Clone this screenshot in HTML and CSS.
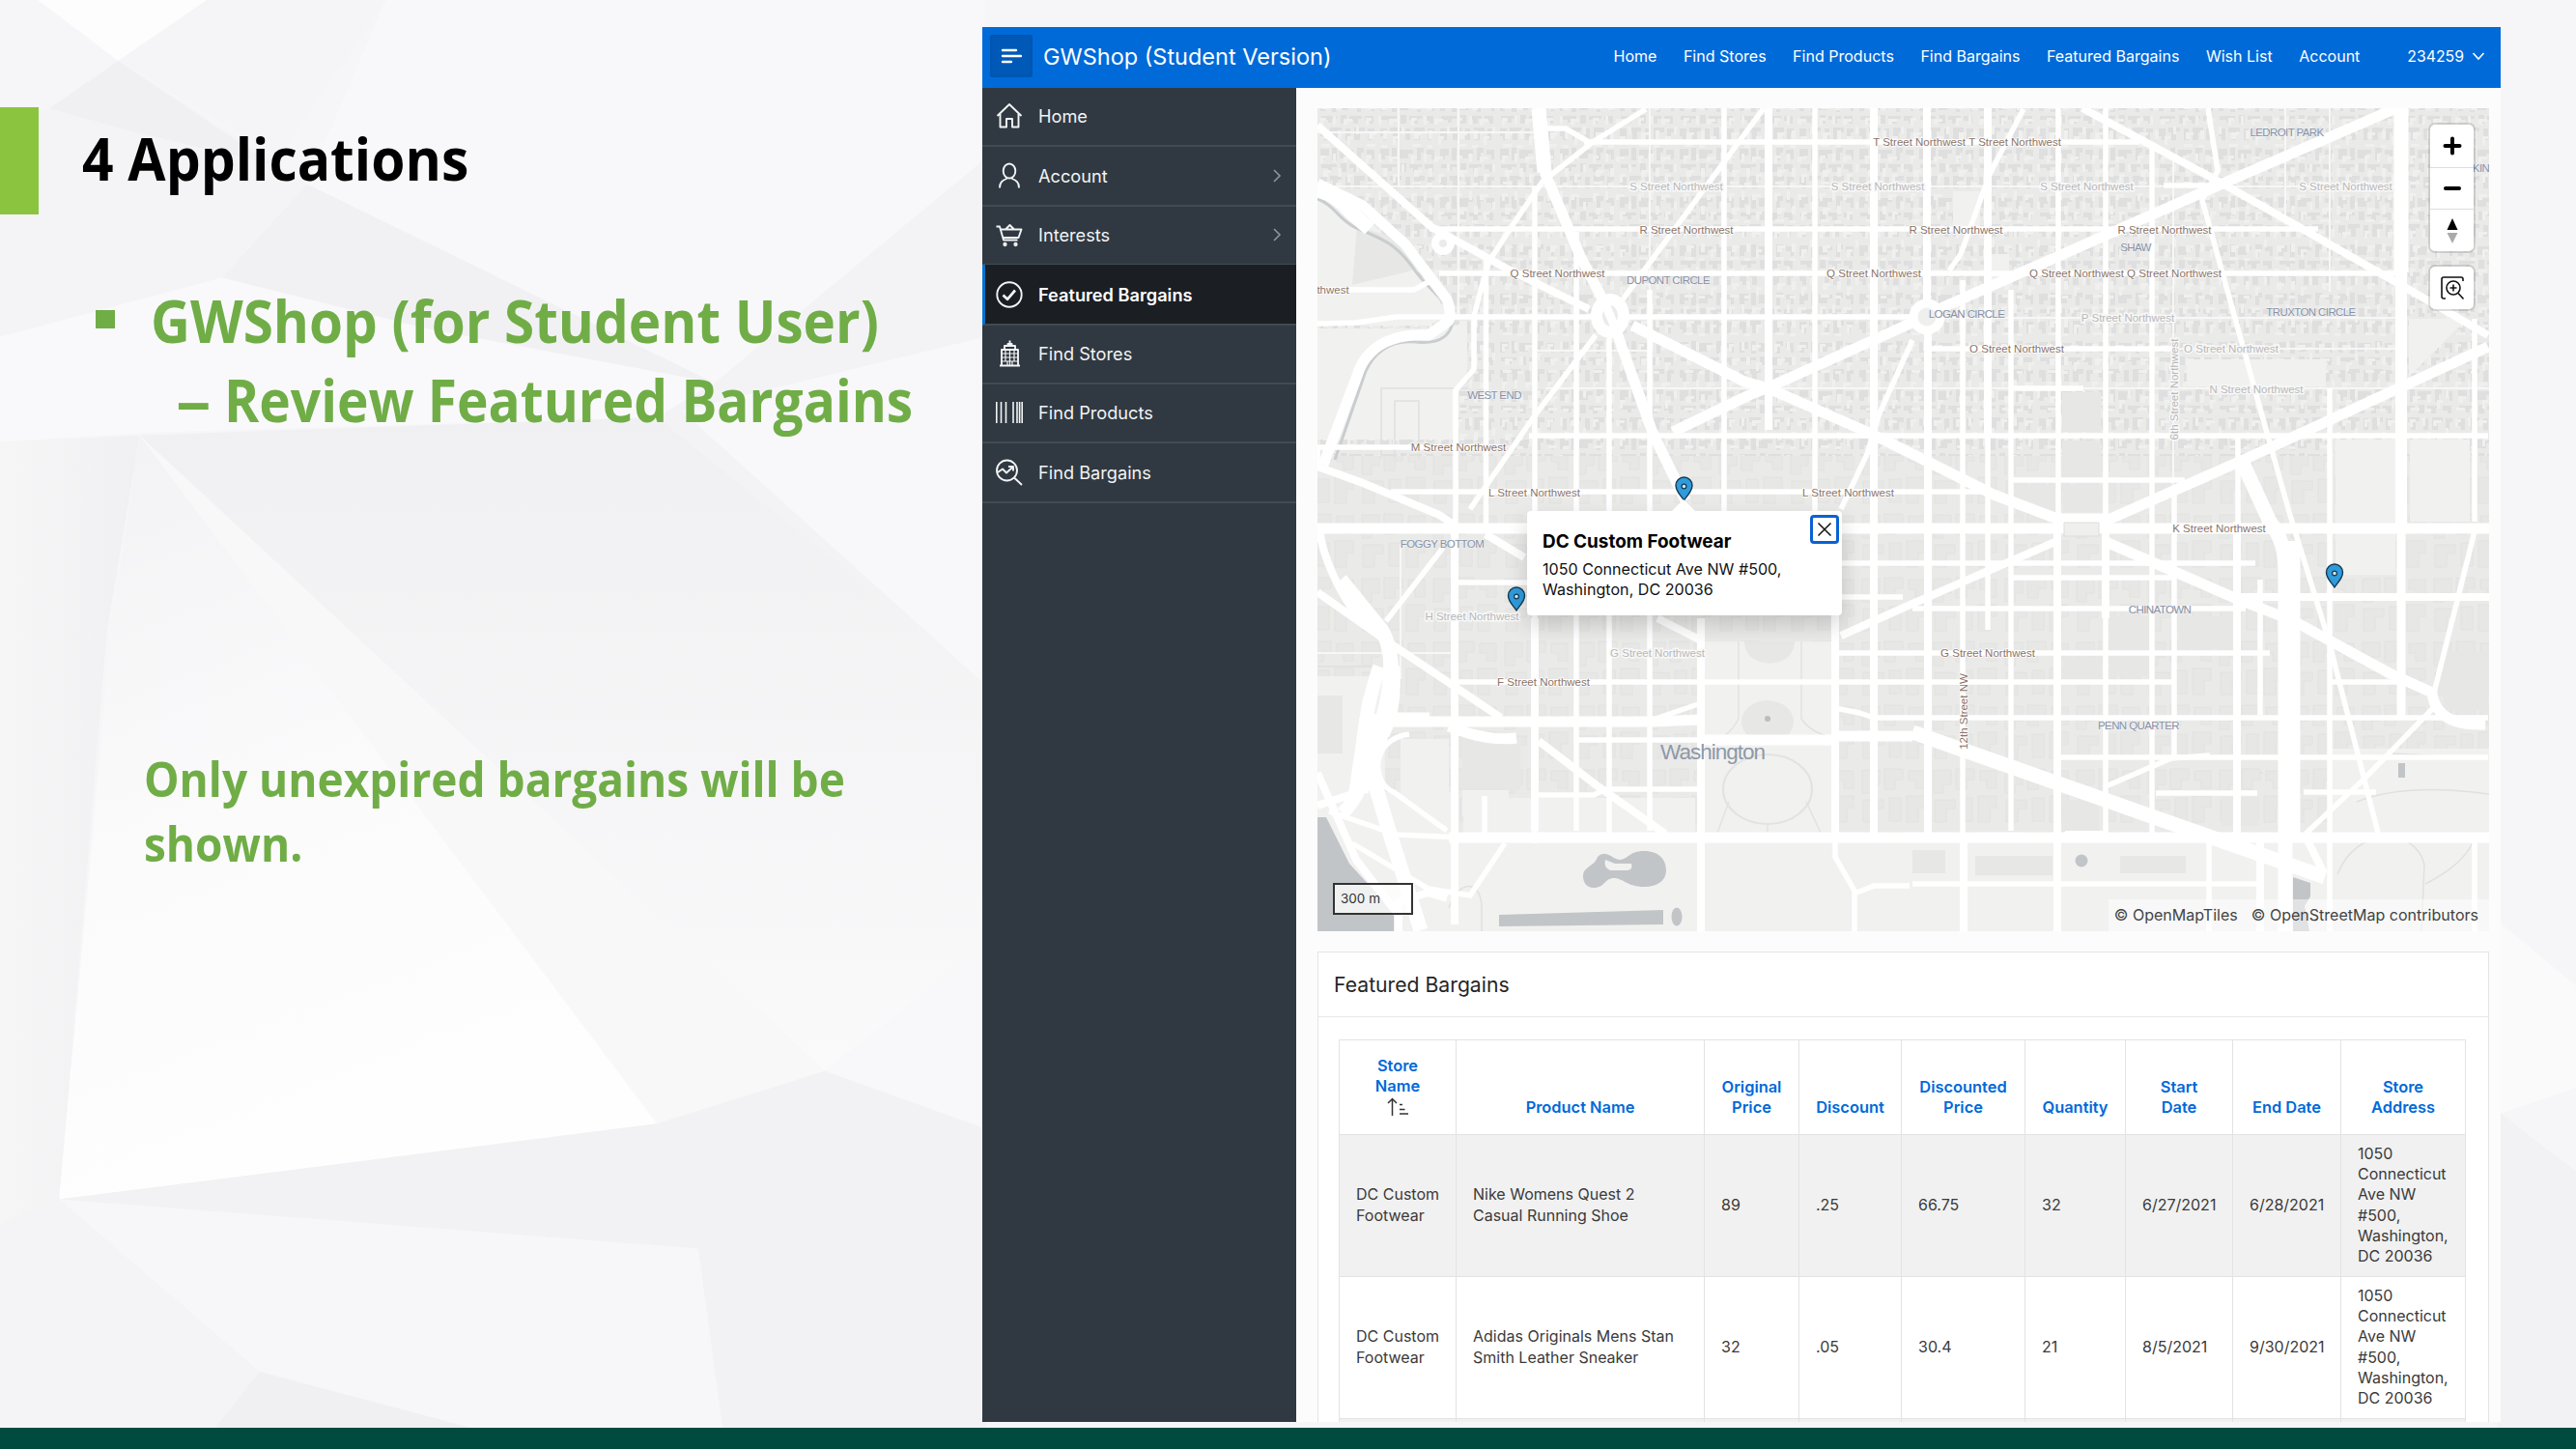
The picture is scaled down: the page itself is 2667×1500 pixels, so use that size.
FILE: index.html
```html
<!DOCTYPE html>
<html lang="en">
<head>
<meta charset="utf-8">
<title>4 Applications</title>
<link rel="stylesheet" href="styles.css">
</head>
<body>
<div class="slide">
  <svg class="backdrop" viewBox="0 0 1568 882" preserveAspectRatio="none" aria-hidden="true">
    <defs>
      <linearGradient id="sheet" x1="0" y1="0" x2="0.3" y2="1"><stop offset="0" stop-color="#f2f2f4"/><stop offset=".55" stop-color="#fbfbfc"/><stop offset="1" stop-color="#fefefe"/></linearGradient>
      <linearGradient id="fade" x1="0" y1="0" x2="0" y2="1"><stop offset="0" stop-color="#f0f0f2"/><stop offset="1" stop-color="#fafafb"/></linearGradient>
      <linearGradient id="left" x1="0" y1="0" x2="1" y2="0"><stop offset="0" stop-color="#f6f6f7"/><stop offset="1" stop-color="#f0f0f2"/></linearGradient>
    </defs>
    <rect width="1568" height="882" fill="#f6f6f8"/>
    <polygon points="23,0 126,0 72,37" fill="#fdfdfe"/>
    <polygon points="126,0 235,0 170,95 72,37" fill="#f5f5f7"/>
    <polygon points="72,37 30,66 0,75 0,269 95,263 135,169 187,112" fill="#f4f4f6"/>
    <polygon points="72,37 30,66 80,80 165,100" fill="#f0f0f2"/>
    <polygon points="187,112 135,169 0,205 0,269 95,263 400,254 435,233" fill="#f9f9fb"/>
    <polygon points="187,112 135,169 260,200 435,233" fill="#f1f1f3"/>
    <polygon points="235,0 600,0 600,98 435,233 187,112" fill="#f8f8fa"/>
    <polygon points="598,98 435,233 400,254 600,415" fill="#f3f3f5"/>
    <polygon points="0,269 85,265 65,385 36,730 0,760" fill="url(#left)"/>
    <polygon points="85,265 400,254 600,415 600,575 502,652" fill="url(#fade)"/>
    <polygon points="415,250 600,205 600,417" fill="#f8f8fa"/>
    <polygon points="85,265 68,380 36,730 400,684" fill="url(#sheet)"/>
    <polygon points="85,265 400,684 502,652" fill="#f8f8f9" opacity=".75"/>
    <polygon points="502,652 600,575 600,687" fill="#f8f8fa"/>
    <polygon points="36,730 400,684 502,652 600,687 600,870 290,870 158,835" fill="#f2f2f4"/>
    <polygon points="36,730 158,835 290,870 440,870 425,760" fill="#f7f7f9"/>
    <polygon points="0,745 36,730 158,835 130,870 0,870" fill="#f4f4f6"/>
    <polygon points="158,835 130,870 290,870" fill="#f0f0f2"/>
    <polygon points="1520,560 1568,600 1568,662 1522,678" fill="#fafafb"/>
    <polygon points="1520,676 1568,713 1568,870 1520,870" fill="#f2f2f4"/>
  </svg>

  <main class="stage">
    <section class="notes">
      <h1 class="notes-title"><span class="tab"></span><span class="sq t1">4 Applications</span></h1>
      <div class="bullet"><i class="dot"></i><span class="sq t2">GWShop (for Student User)</span></div>
      <div class="sub"><span class="dash">–</span><span class="sq t3">Review Featured Bargains</span></div>
      <p class="remark"><span class="sq t4">Only unexpired bargains will be</span><br><span class="sq t4">shown.</span></p>
    </section>

    <div class="app">
      <header class="bar">
        <button class="menu" aria-label="Menu"><svg width="22" height="18" viewBox="0 0 22 18"><path d="M2 3h14M2 9h19M2 15h9" stroke="#fff" stroke-width="2.4" stroke-linecap="round"/></svg></button>
        <strong class="brand">GWShop (Student Version)</strong>
        <nav class="links">
          <a>Home</a><a>Find Stores</a><a>Find Products</a><a>Find Bargains</a><a>Featured Bargains</a><a>Wish List</a><a>Account</a>
        </nav>
        <span class="user"><span>234259</span><svg width="14" height="10" viewBox="0 0 14 10"><path d="M1.500 2l5.500 6 5.500-6" fill="none" stroke="#fff" stroke-width="1.6"/></svg></span>
      </header>

      <div class="body">
        <aside class="side">
          <a class="item"><svg class="ico" viewBox="0 0 28 28"><path d="M1.500 14L14 2l12.500 12M4.500 12v13.500H11v-8.500h6v8.500h6.500V12"/></svg><span>Home</span></a>
          <a class="item"><svg class="ico" viewBox="0 0 28 28"><ellipse cx="14" cy="9" rx="6.300" ry="7.500"/><path d="M4 26.500c0-5.500 2.500-7.500 7-9.500v-1.500M24 26.500c0-5.500-2.500-7.500-7-9.500v-1.500"/></svg><span>Account</span><svg class="chev" viewBox="0 0 10 14"><path d="M2 1l6 6-6 6"/></svg></a>
          <a class="item"><svg class="ico" viewBox="0 0 28 28"><path d="M.5 5.500h3.500L8 19.500h14.500M4.800 8.500h21.700l-3 8.500H7.500M10 8.500l4.500-4.500 4.500 4.500"/><circle cx="9.500" cy="24" r="1.200"/><circle cx="20.500" cy="24" r="1.200"/></svg><span>Interests</span><svg class="chev" viewBox="0 0 10 14"><path d="M2 1l6 6-6 6"/></svg></a>
          <a class="item on"><svg class="ico" viewBox="0 0 28 28"><circle cx="14" cy="14" r="12.700"/><path d="M7.500 14.500l4.500 4.300 8-9.300" stroke-width="2.700"/></svg><span>Featured Bargains</span></a>
          <a class="item"><svg class="ico" viewBox="0 0 28 28"><path d="M4 26.500h21M6 26V10h17v16M9 10V6h11v4M12.500 6V4h4v2M14.500 4V.5"/><path d="M6 14h17M6 18h17M6 22h17M10 10v12M14.500 10v16M19 10v12M12 22v4M17 22v4" stroke-width="1.200"/></svg><span>Find Stores</span></a>
          <a class="item"><svg class="ico" viewBox="0 0 28 28"><path d="M.8 3v22M5.500 3v22M10.500 3v22M18 3v22M22 3v22M24.600 3v22M27.200 3v22" stroke-width="1.600"/></svg><span>Find Products</span></a>
          <a class="item"><svg class="ico" viewBox="0 0 28 28"><circle cx="11.500" cy="12" r="10.500"/><path d="M19 19.500l8 7.500M2 14l5-3.500 4 4 6.500-6M13 8h5v4.500" /></svg><span>Find Bargains</span></a>
        </aside>

        <div class="content">
          <div class="map">
            <svg class="tiles" viewBox="1364 112 1213 852" preserveAspectRatio="none">
              <defs>
                <pattern id="blocks" width="62" height="50" patternUnits="userSpaceOnUse">
                  <path fill="#dfdfdf" d="M3 4h9v7h-4v4H3zM15 3h5v13h-5zM23 5h14v4h-5v5h-9zM41 3h7v5h-3v8h-4zM51 5h8v10h-3v-5h-5zM4 20h16v3h-5v4h-4v-3H4zM24 19h6v9h-6zM33 20h13v3h-4v5h-5v-4h-4zM49 20h9v8h-4v-3h-5zM3 33h7v12H6v-4H3zM13 32h12v4h-4v9h-5v-8h-3zM29 33h5v12h-5zM38 32h11v5h-5v8h-6zM52 33h7v4h-3v8h-4z"/>
                </pattern>
                <pattern id="yards" width="47" height="39" patternUnits="userSpaceOnUse">
                  <path fill="#f0f0ef" d="M4 5h6v3H7v5H4zM17 3h3v9h-3zM28 6h9v3h-5v3h-4zM41 14h3v8h-3zM7 20h8v3h-3v4H7zM22 18h4v9h-4zM32 24h6v3h-3v6h-3zM5 32h9v3H5zM20 33h6v3h-6z"/>
                </pattern>
                <pattern id="lots" width="74" height="66" patternUnits="userSpaceOnUse">
                  <path fill="#e7e7e5" stroke="#e0e0de" stroke-width=".8" d="M4 5h18v15h-8v9H4zM27 4h19v11h-8v10H27zM52 6h17v18H59v-8h-7zM5 36h21v9h-9v14H5zM32 34h12v24H32zM50 32h19v12h-7v15H50z"/>
                </pattern>
                <g id="pin"><path d="M0 0C-3-5-8.500-9-8.500-15.500a8.500 8.500 0 0 1 17 0C8.500-9 3-5 0 0z" fill="#2f9bdb" stroke="#16384f" stroke-width="1.400"/><circle cy="-14.500" r="2.400" fill="#cfe9f8" stroke="#16384f" stroke-width="1.200"/></g>
              </defs>
              <rect x="1364" y="112" width="1213" height="852" fill="#eaeae9"/>
              <rect x="1364" y="112" width="1213" height="360" fill="url(#blocks)"/>
              <rect x="1364" y="112" width="1213" height="360" fill="url(#yards)"/>
              <rect x="1364" y="472" width="1213" height="395" fill="url(#lots)"/>
              <g fill="#f1f1f0">
                <path d="M1364 205l50 20 40 40 46 60-20 12H1364zM1364 340h115l40-5v50l-12 20v50H1364zM1764 664h134v198h-134zM1364 868h1213v96H1364zM1364 820h140v60H1364zM2413 775h164v100h-164zM2264 372h144v28h-144zM2494 330h60l-60 60zM2418 455h62v140h-62zM2495 455h62v85h-62z"/>
                <path d="M1514 785h48v60h-48zM1515 826h240v36h-240zM2060 263h20v24h-20zM2022 198h28v38h-28zM1364 700h70v130h-70zM1450 765h50v90h-50z"/>
              </g>
              <g fill="#e7e8e5">
                <path d="M2135 406h40v41h-40zM2135 456h40v38h-40zM2087 502h44v30h-44zM2136 502h40v28h-40zM2184 638h42v62h-42zM2256 638h60v34h-60zM2136 680h40v25h-40zM1514 768h60v50h-60zM2530 675h46v60h-46zM2300 825h38v30h-38zM2135 828h38v34h-38zM1980 880h34v24h-34zM2045 886h80v20h-80zM2195 886h68v18h-68zM1364 720h26v60h-26z"/>
                <path d="M1405 235l45 12 25 30-75 18z"/><ellipse cx="1830" cy="747" rx="27" ry="22"/><path d="M1806 664h52c0 30-52 30-52 0z"/>
              </g>
              <path d="M1430 475v-73h90M1444 475v-60h25v60M1364 690h60M2420 905c20-50 80-50 90-10l-3 69M2511 915q40-20 50-45M2340 800h3M1500 940c10-30 34-30 34 0v24M2476 780l60 3M2440 830q50-20 137-8" fill="none" stroke="#e0e0df" stroke-width="1.500"/>
              <ellipse cx="1830" cy="817" rx="46" ry="36" fill="#f1f1f0" stroke="#e2e2e1" stroke-width="2"/>
              <path d="M1790 830l-12 32M1870 830l15 32M1830 853v10M1800 664v80q-10 20-34 28M1865 664v80q10 15 34 20" fill="none" stroke="#e2e2e1" stroke-width="1.500"/>
              <circle cx="1830" cy="744" r="3" fill="#b9bdbf"/>
              <g fill="#c1c5c8">
                <path d="M1364 846h9l24 48 46 50v20h-79z"/>
                <path d="M1639 907c0-10 12-10 15-20 8-8 14 1 22 3 10 0 10-9 26-9 17 0 23 10 23 20s-8 17-23 17c-17 0-22-9-31-9-10 0-9 10-21 10-7 0-11-5-11-12z"/>
                <path d="M1552 947l170-5v15l-170 2z"/><ellipse cx="1736" cy="949" rx="5.500" ry="9.500"/><circle cx="2155" cy="891" r="6.500"/><path d="M2483 790h7v15h-7zM2374 908l18 6v14l-6 10 5 26h-17z"/>
              </g>
              <path d="M1662 890l10 4h17q2 6-4 7h-18q-7-3-5-11z" fill="#f1f1f0"/>
              <path d="M1364 206c20 8 20 20 40 30 30 12 42 18 58 40 20 30 40 34 42 58-4 18-20 22-38 20-30-3-45 15-52 30l-32 92" fill="none" stroke="#c9cdcf" stroke-width="3"/>
              <g fill="none" stroke="#f7f7f7" stroke-width="2">
                <path d="M1364 137h230M1364 193h120M1480 193h1000M1600 402h980M1510 329v-220M1448 112v82M1708 112v210M2250 160v370M2412 112v190M2366 112v120M1590 363h120M2000 329h480M2250 361h230M1364 676h140M1450 563v140"/>
              </g>
              <g fill="none" stroke="#fff" stroke-width="5.500">
                <path d="M1538.500 270v277M1589 193v680M1632 240v620M1666 350v515M1708 300v560M1785 112v430M1879 112v430M2032 290v577M2058 112v540M2082 300v560M2131 112v700M2180 112v755M2228 150v720M2251 510v275M2340 600v140M2412 402v562M2562 330v210M2317 450v100M1526 330v52l-19 22v143"/>
                <path d="M1640 147h575M1480 237h920M1490 283h990M1364 335l40-1 42-6h550M1364 300h100l22-12M1583 451h993M1364 463h190M1440 509h625M1995 361h255M2082 402h75M2082 497h180M2240 192h60"/>
                <path d="M1364 547h60M1900 583h435M2083 598h167M1510 603h80M1900 618h70M1980 630h345M1900 676h450M1510 706h740M1632 766h268M1590 823h60l12-6h95M2232 821h105M1980 915h357M2130 784h446M1980 743h596M2412 706h80M2385 820h75M1900 733l25 5 15 5h50M1537 824v40"/>
                <path d="M1826 112l-146 198M1652 347l-63 83-67 97M1704 113l-55 34-52 41-31 45-24 37-8 27-8 30M1601 133h20l24 14M2095 113l-35 67-30 83-12 17M1980 352l-35 78-12 40-27 57M2286 112l10 65-16 30 25 90 35 126 30 107 41 133 53 207M1494 567l-59 76M2522 730l-75 77-60 56M2178 815l70-30 40-3M1708 746l53-18M1558 873l-36 54-43-7-79-47M2562 550l-10 40-32 127M2562 867v97M2287 870v94M1900 867v20l20 35v42M1920 925l20-8h37"/>
                <path d="M1376 840l70 24 90 4M1459 760c-40 5-40 50-16 60l55 40M1364 483v-20"/>
              </g>
              <g fill="none" stroke="#fff" stroke-width="8" stroke-linejoin="round">
                <path d="M1831 112v285M1831 395v50M1940 112v755M1995 112v200M1996 345v522M2058 112v340M1506 547v410M1761 640v324M1900 637v230M2130 540v424M2316 540v330M2180 540v100M1589 640v220M2033 867v97"/>
                <path d="M2156 112l145 78 176 100 99 57M2130 560l-150 65-74 33M1364 130l118 105 78 43 85 42M1364 613l71 50 119 80M1593 767l60 46 71 50M2320 618h257M1538 553l40 24M1716 640l43 22"/>
                <path d="M1364 483l47 17 79 33 15 10M1368 545c-8 20 40 120 67 110M1415 722l-15 100-36 12M1364 800l40 90 46 60M1448 964v-30l30-10 20 6M2178 864h-40M2340 870v94M2386 864l20 40"/>
              </g>
              <g fill="none" stroke="#fff" stroke-width="11" stroke-linejoin="round">
                <path d="M1364 190l47 23 44 40 43 57q5 12 2 22l-21 15q-40-2-60 18-10 10-14 24l-35 92"/>
                <path d="M1593 112l7 68 36 85 31 60 44 123 34 70M1690 337l116 58 25 7 104 46 45 22 84 42 66 25h55l140-62 251-116M1732 447l79-38 20-8 142-64 41-20 287-127 180-78M2178 560l138 60 59 23 99 54 44 20q4 35 55 33"/>
                <path d="M1364 547h1213M1440 747h272l48-2M1500 867h1077M1760 766h140M1900 762h80M1420 752q4-9 20-9h40M1500 752q40 16 70 12"/>
              </g>
              <g fill="none" stroke="#fff" stroke-width="15" stroke-linejoin="round">
                <path d="M1364 197q20 4 34 22l20 18M2486 112v170M2320 475l30 65q16 20 16 50v374M1980 758l427 150M1388 600l43 53q14 25 8 77l-20 67 20 66 32 100M1427 740l-18 80M1593 112l6 66"/>
                <path d="M2486 280v267" stroke-width="12"/><path d="M2486 547v196" stroke-width="9"/><path d="M2372 560v304" stroke-width="19"/>
                <path d="M1438 670q6 50-20 110-6 40-28 62M1428 690q-20 60-18 120M1442 690q4 40-10 70" stroke-width="14"/>
              </g>
              <circle cx="1494" cy="252" r="8" fill="#ebebea" stroke="#fff" stroke-width="8"/>
              <ellipse cx="1667" cy="327" rx="14" ry="17" fill="#ebebea" stroke="#fff" stroke-width="12"/><path d="M1660 310l15 36" stroke="#fff" stroke-width="9"/>
              <circle cx="1995" cy="328" r="14" fill="#efefee" stroke="#fff" stroke-width="9"/>
              <path d="M2137 541h36v14h-36z" fill="#efefee" stroke="#ddd" stroke-width="1"/>

              <g class="street">
                <text x="1987" y="151">T Street Northwest</text><text x="2086" y="151">T Street Northwest</text>
                <text x="1746" y="242">R Street Northwest</text><text x="2025" y="242">R Street Northwest</text><text x="2241" y="242">R Street Northwest</text>
                <text x="1612.500" y="287">Q Street Northwest</text><text x="1940" y="287">Q Street Northwest</text><text x="2150" y="287">Q Street Northwest</text><text x="2251" y="287">Q Street Northwest</text>
                <text x="1380" y="304">thwest</text>
                <text x="2088" y="365">O Street Northwest</text><text x="1510" y="467">M Street Northwest</text>
                <text x="1588.500" y="514">L Street Northwest</text><text x="1913.500" y="514">L Street Northwest</text>
                <text x="2297.500" y="551">K Street Northwest</text><text x="1598" y="710">F Street Northwest</text><text x="2058" y="680">G Street Northwest</text>
                <text transform="translate(2036.500 736.500) rotate(-90)">12th Street NW</text>
              </g>
              <g class="street minor">
                <text x="1735.500" y="197">S Street Northwest</text><text x="1944" y="197">S Street Northwest</text><text x="2160.500" y="197">S Street Northwest</text><text x="2428.500" y="197">S Street Northwest</text>
                <text x="2203" y="333">P Street Northwest</text><text x="2310" y="365">O Street Northwest</text><text x="2336" y="407">N Street Northwest</text>
                <text transform="translate(2255 403) rotate(-90)">6th Street Northwest</text>
                <text x="1524" y="642">H Street Northwest</text><text x="1716" y="680">G Street Northwest</text>
              </g>
              <g class="area">
                <text x="1727" y="294">DUPONT CIRCLE</text><text x="1547" y="413">WEST END</text><text x="2211" y="260">SHAW</text><text x="2367.500" y="141">LEDROIT PARK</text><text x="2036" y="329">LOGAN CIRCLE</text><text x="2392.500" y="327">TRUXTON CIRCLE</text><text x="1493" y="567">FOGGY BOTTOM</text><text x="2236" y="635">CHINATOWN</text><text x="2214" y="755">PENN QUARTER</text><text x="2568.500" y="178">KIN</text>
              </g>
              <text class="city" x="1773" y="786">Washington</text>
              <use href="#pin" x="1743.500" y="518"/><use href="#pin" x="1570" y="632"/><use href="#pin" x="2417" y="608"/>
            </svg>

            <div class="zoom">
              <button aria-label="Zoom in"><svg width="20" height="20" viewBox="0 0 20 20"><path d="M10 2.500v15M2.500 10h15" stroke="#000" stroke-width="4" stroke-linecap="round"/></svg></button>
              <button aria-label="Zoom out"><svg width="20" height="20" viewBox="0 0 20 20"><path d="M3 10h14" stroke="#000" stroke-width="4" stroke-linecap="round"/></svg></button>
              <button aria-label="Reset north"><svg width="14" height="28" viewBox="0 0 14 28"><path d="M7 1l5.500 12h-11z" fill="#000"/><path d="M7 27l5.500-11h-11z" fill="#aaa"/></svg></button>
            </div>
            <button class="boxzoom" aria-label="Box zoom"><svg width="26" height="26" viewBox="0 0 26 26" fill="none" stroke="#111" stroke-width="1.600"><path d="M6 24H4q-2 0-2-2V4q0-2 2-2h18q2 0 2 2v2"/><circle cx="14" cy="13" r="7"/><path d="M14 9.500v7M10.500 13h7M19 18.500l5.500 6"/></svg></button>

            <div class="popup">
              <h3>DC Custom Footwear</h3>
              <p>1050 Connecticut Ave NW #500,<br>Washington, DC 20036</p>
              <button class="close" aria-label="Close"><svg width="16" height="16" viewBox="0 0 16 16"><path d="M1.500 1.500l13 13M14.500 1.500l-13 13" stroke="#111" stroke-width="1.500"/></svg></button>
            </div>
            <div class="scale">300 m</div>
            <div class="credit"><span>© OpenMapTiles</span><span>© OpenStreetMap contributors</span></div>
          </div>

          <section class="card">
            <h2>Featured Bargains</h2>
            <div class="scroll">
              <table>
                <colgroup><col class="c1"><col class="c2"><col class="c3"><col class="c4"><col class="c5"><col class="c6"><col class="c7"><col class="c8"><col class="c9"></colgroup>
                <thead>
                  <tr><th>Store<br>Name<br><svg class="sort" width="24" height="20" viewBox="0 0 24 20"><path d="M6.500 19V1.500M2 6l4.500-4.500L11 6M14 7.500h3M14 12.500h5.500M14 17h9" fill="none" stroke="#333" stroke-width="1.500"/></svg></th><th>Product Name</th><th>Original<br>Price</th><th>Discount</th><th>Discounted<br>Price</th><th>Quantity</th><th>Start<br>Date</th><th>End Date</th><th>Store<br>Address</th></tr>
                </thead>
                <tbody>
                  <tr><td>DC Custom<br>Footwear</td><td>Nike Womens Quest 2<br>Casual Running Shoe</td><td>89</td><td>.25</td><td>66.75</td><td>32</td><td>6/27/2021</td><td>6/28/2021</td><td>1050<br>Connecticut<br>Ave NW<br>#500,<br>Washington,<br>DC 20036</td></tr>
                  <tr><td>DC Custom<br>Footwear</td><td>Adidas Originals Mens Stan<br>Smith Leather Sneaker</td><td>32</td><td>.05</td><td>30.4</td><td>21</td><td>8/5/2021</td><td>9/30/2021</td><td>1050<br>Connecticut<br>Ave NW<br>#500,<br>Washington,<br>DC 20036</td></tr>
                  <tr><td></td><td></td><td></td><td></td><td></td><td></td><td></td><td></td><td></td></tr>
                </tbody>
              </table>
            </div>
          </section>
        </div>
      </div>
    </div>
  </main>
  <footer class="foot"></footer>
</div>
</body>
</html>
```
FILE: styles.css
```css
* { box-sizing: border-box; }
body { margin: 0; width: 2667px; height: 1500px; overflow: hidden; font-family: Inter, "Liberation Sans", sans-serif; color: #3a3a3a; }
h1, h2, h3, p { margin: 0; }
button { border: 0; padding: 0; margin: 0; background: none; display: flex; align-items: center; justify-content: center; font: inherit; }
.slide { position: relative; display: flex; flex-direction: column; width: 2667px; height: 1500px; }
.backdrop { position: absolute; inset: 0; width: 100%; height: 100%; z-index: -1; }
.stage { display: flex; height: 1478px; padding-top: 28px; }
.foot { height: 22px; background: #004b40; }

/* slide notes */
.notes { width: 1017px; flex: none; padding-top: 83px; font-family: "Open Sans", "Noto Sans", sans-serif; font-weight: 700; color: #70ad47; }
.sq { display: inline-block; white-space: nowrap; transform-origin: 0 50%; }
.t1 { transform: scaleX(.949); margin-bottom: 6px; }
.t2 { transform: scaleX(.943); }
.t3 { transform: scaleX(.917); }
.t4 { transform: scaleX(.902); }
.notes-title { display: flex; align-items: center; height: 111px; color: #000; font-size: 60px; }
.tab { width: 40px; height: 111px; margin-right: 45px; background: #8bc53f; }
.bullet { display: flex; align-items: center; height: 82px; margin-top: 69px; padding-left: 99px; font-size: 60px; }
.dot { width: 20px; height: 19px; margin: 0 37px 4px 0; background: #70ad47; }
.sub { display: flex; align-items: center; height: 82px; padding-left: 182px; font-size: 60px; }
.dash { width: 30px; margin-right: 20px; transform-origin: 0 50%; transform: scaleX(1.22); }
.remark { margin-top: 317px; padding-left: 149px; font-size: 51px; line-height: 67px; }

/* application frame */
.app { width: 1572px; height: 1444px; display: flex; flex-direction: column; background: #fcfcfc; overflow: hidden; }
.bar { display: flex; align-items: center; height: 63px; flex: none; padding: 0 16px 3px 8px; background: #006ad9; color: #fff; }
.menu { width: 44px; height: 44px; border-radius: 3px; background: #0059b6; box-shadow: inset 0 0 3px #004c9d; }
.brand { margin-left: 11px; font-size: 23.5px; font-weight: 400; }
.links { display: flex; gap: 27.5px; margin-left: auto; font-size: 16.05px; }
.user { display: flex; align-items: center; gap: 8px; margin-left: 49px; font-size: 15.8px; }
.body { display: flex; flex: 1; min-height: 0; }
.side { width: 325px; flex: none; background: #303942; color: #f2f3f4; }
.item { display: flex; align-items: center; height: 61.4px; padding: 0 15px 1px 14px; border-bottom: 2px solid #414b54; font-size: 18.2px; }
.item span { flex: 1; margin-left: 16px; }
.item.on { margin-top: -1px; height: 62.4px; padding: 1px 15px 0 11px; background: #1b1e23; border-left: 3px solid #0572ce; color: #fff; font-weight: 600; }
.ico { width: 28px; height: 28px; fill: none; stroke: #f2f3f4; stroke-width: 1.9; stroke-linejoin: round; }
.chev { width: 10px; height: 14px; fill: none; stroke: #8e959b; stroke-width: 1.6; }
.content { flex: 1; padding: 21px 12px 0 22px; min-width: 0; }

/* map */
.map { position: relative; height: 852px; overflow: hidden; }
.tiles { display: block; width: 100%; height: 100%; }
.tiles text { font-family: "Liberation Sans", Arial, sans-serif; text-anchor: middle; paint-order: stroke; }
.street { font-size: 11.5px; fill: #8b7468; stroke: #fff; stroke-width: 1.5px; }
.minor { fill: #b8b8b8; stroke: #f8f8f8; stroke-width: 3px; }
.area { font-size: 11.5px; letter-spacing: -.6px; fill: #8791a5; stroke: #f4f4f4; stroke-width: 1px; }
.city { font-size: 22.5px; letter-spacing: -1px; fill: #8e98a8; }
.zoom, .boxzoom { position: absolute; left: 1152px; width: 45px; background: #fff; border-radius: 5px; box-shadow: 0 0 0 2px rgba(0,0,0,.13); }
.zoom { top: 17px; height: 131px; display: grid; grid-template-rows: repeat(3, 1fr); }
.zoom button + button { border-top: 1px solid #ddd; }
.boxzoom { top: 164px; height: 44px; }
.popup { position: absolute; left: 217px; top: 417px; width: 326px; height: 108px; padding: 20px 16px; background: #fff; border-radius: 4px; box-shadow: 0 10px 22px rgba(0,0,0,.16); color: #111; }
.popup::before { content: ""; position: absolute; left: 149px; top: -12px; border: 13px solid transparent; border-top: 0; border-bottom-color: #fff; }
.popup h3 { font-size: 18.9px; line-height: 24px; font-weight: 700; color: #000; }
.popup p { margin-top: 6px; font-size: 16.1px; line-height: 21px; white-space: nowrap; }
.close { position: absolute; right: 3px; top: 4px; width: 30px; height: 30px; border: 3px solid #0a62d2; border-radius: 4px; }
.scale { position: absolute; left: 16px; top: 802px; width: 83px; height: 33px; border: 2px solid #333; background: rgba(255,255,255,.75); padding-left: 6px; font-size: 13.5px; line-height: 29px; color: #333; }
.credit { position: absolute; right: 0; bottom: 0; height: 33px; display: flex; gap: 14px; padding: 0 11px 2px 6px; align-items: center; background: rgba(255,255,255,.5); font-size: 16.05px; color: #444; white-space: nowrap; }

/* report */
.card { margin-top: 21px; height: 600px; background: #fff; border: 1px solid #e4e4e4; }
.card h2 { height: 67px; padding-left: 16px; border-bottom: 1px solid #e8e8e8; font-size: 21.2px; font-weight: 400; line-height: 66px; color: #262626; }
.scroll { padding: 23px 22px 0 21px; }
table { width: 1166px; table-layout: fixed; border-collapse: collapse; font-size: 16px; line-height: 21.2px; }
th, td { border: 1px solid #e3e3e3; padding: 0 17px; white-space: nowrap; text-align: left; }
th { height: 97.500px; padding: 0 0 16px; vertical-align: bottom; text-align: center; color: #0069d9; font-weight: 600; font-size: 16.4px; }
td { height: 147px; }
tbody tr:nth-child(odd) { background: #f1f1f1; }
.sort { display: block; margin: 0 auto 2px; }
.c1 { width: 121px; } .c2 { width: 257px; } .c3 { width: 98px; } .c4 { width: 106px; } .c5 { width: 128px; } .c6 { width: 104px; } .c7 { width: 111px; } .c8 { width: 112px; } .c9 { width: 129px; }
```
